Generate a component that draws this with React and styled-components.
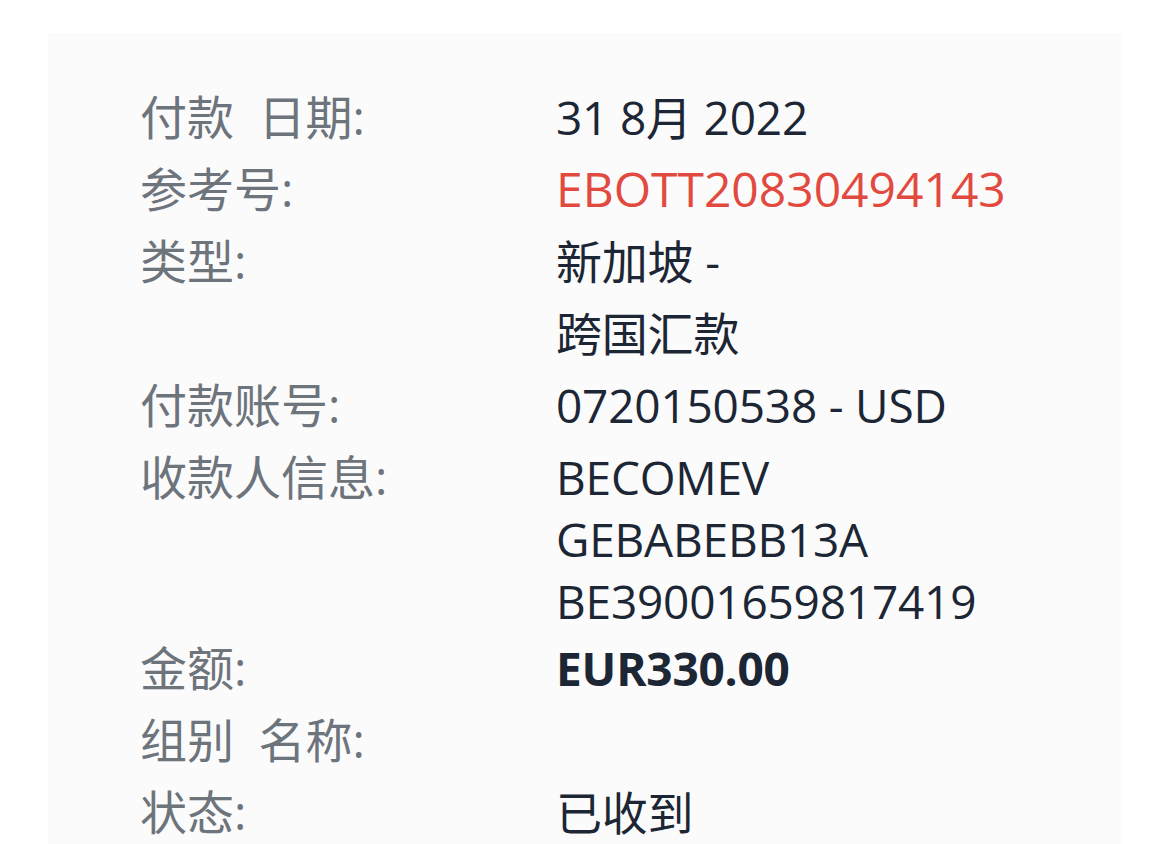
import React from "react";
import styled, { createGlobalStyle } from "styled-components";

const Global = createGlobalStyle`
  html, body { margin: 0; padding: 0; background: #ffffff; }
  body { font-family: "Open Sans", "Noto Sans CJK SC", sans-serif; }
`;

const Page = styled.div`
  padding: 33px 48px 0 48px;
  height: 844px;
  box-sizing: border-box;
  overflow: hidden;
`;

const Panel = styled.div`
  background: #fbfbfb;
  min-height: 811px;
  padding: 48px 0 0 92px;
  box-sizing: border-box;
`;

const Row = styled.div`
  display: grid;
  grid-template-columns: 416px 1fr;
  align-items: start;
`;

const Label = styled.div`
  color: #6d747b;
  font-size: 47px;
  line-height: 72px;
  white-space: pre;
`;

const Value = styled.div`
  color: ${(p) => (p.$accent ? "#e24a40" : "#1c2634")};
  font-size: ${(p) => (p.$accent ? "48px" : "46px")};
  font-weight: ${(p) => (p.$bold ? 700 : 400)};
  letter-spacing: ${(p) => (p.$accent ? "0" : "-0.2px")};
  padding-top: ${(p) => (p.$tight ? "5px" : "0")};
  display: flex;
  flex-direction: column;
`;

const Line = styled.span`
  line-height: ${(p) => (p.$tight ? "62px" : "72px")};
`;

const rows = [
  { label: "付款  日期:", lines: ["31 8月 2022"] },
  { label: "参考号:", lines: ["EBOTT20830494143"], accent: true },
  { label: "类型:", lines: ["新加坡 -", "跨国汇款"] },
  { label: "付款账号:", lines: ["0720150538 - USD"] },
  {
    label: "收款人信息:",
    lines: ["BECOMEV", "GEBABEBB13A", "BE39001659817419"],
    tight: true,
  },
  { label: "金额:", lines: ["EUR330.00"], bold: true },
  { label: "组别  名称:", lines: [""] },
  { label: "状态:", lines: ["已收到"] },
];

export default function App() {
  return (
    <>
      <Global />
      <Page>
        <Panel>
          {rows.map((r, i) => (
            <Row key={i}>
              <Label>{r.label}</Label>
              <Value $accent={r.accent} $bold={r.bold} $tight={r.tight}>
                {r.lines.map((l, j) => (
                  <Line key={j} $tight={r.tight}>
                    {l || "\u00a0"}
                  </Line>
                ))}
              </Value>
            </Row>
          ))}
        </Panel>
      </Page>
    </>
  );
}
